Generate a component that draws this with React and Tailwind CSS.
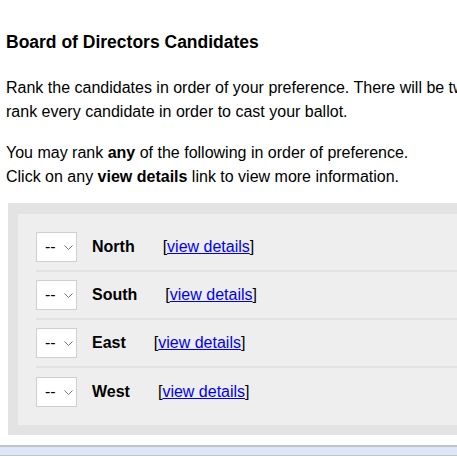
import React from "react";

const candidates = ["North", "South", "East", "West"];

function RankSelect() {
  return (
    <div className="flex h-[30px] w-[41px] shrink-0 items-center border border-[#cfcfcf] bg-white pl-[8px]">
      <span className="text-[16px] leading-none text-black">--</span>
      <svg className="ml-[8px] h-[5px] w-[9px]" viewBox="0 0 9 5" fill="none">
        <path d="M0.5 0.5 L4.5 4.5 L8.5 0.5" stroke="#777" strokeWidth="1" />
      </svg>
    </div>
  );
}

export default function App() {
  return (
    <div className="h-[456px] w-[457px] overflow-hidden bg-white font-['Liberation_Sans',Arial,sans-serif] text-black">
      <div className="w-[640px] px-[6px] pt-[32px]">
        <h2 className="text-[17.5px] font-bold leading-[21px]">Board of Directors Candidates</h2>

        <p className="mt-[23px] whitespace-nowrap text-[16px] leading-[24px]">
          Rank the candidates in order of your preference. There will be two seats filled.
          <br />
          rank every candidate in order to cast your ballot.
        </p>

        <p className="mt-[17px] whitespace-nowrap text-[16px] leading-[24px]">
          You may rank <b>any</b> of the following in order of preference.
          <br />
          Click on any <b>view details</b> link to view more information.
        </p>

        <div className="ml-[2px] mt-[14px] bg-[#e3e3e3] pb-[10px] pl-[10px] pt-[11px]">
          <div className="bg-[#eeeeee] pb-[9px] pl-[18px] pt-[10px]">
            {candidates.map((name, i) => (
              <div
                key={name}
                className={
                  i < candidates.length - 1
                    ? "flex h-[48px] items-center border-b-2 border-[#e2e2e2]"
                    : "flex h-[48px] items-center"
                }
              >
                <RankSelect />
                <span className="ml-[15px] text-[16px] font-bold">{name}</span>
                <span className="ml-[28px] text-[16px]">
                  [<a href="#" className="text-[#0000ee] underline">view details</a>]
                </span>
              </div>
            ))}
          </div>
        </div>
      </div>

      <div className="mt-[10px] h-[12px] w-full border-y-2 border-[#c4c4c4] bg-[#dde7f8]" />
    </div>
  );
}
